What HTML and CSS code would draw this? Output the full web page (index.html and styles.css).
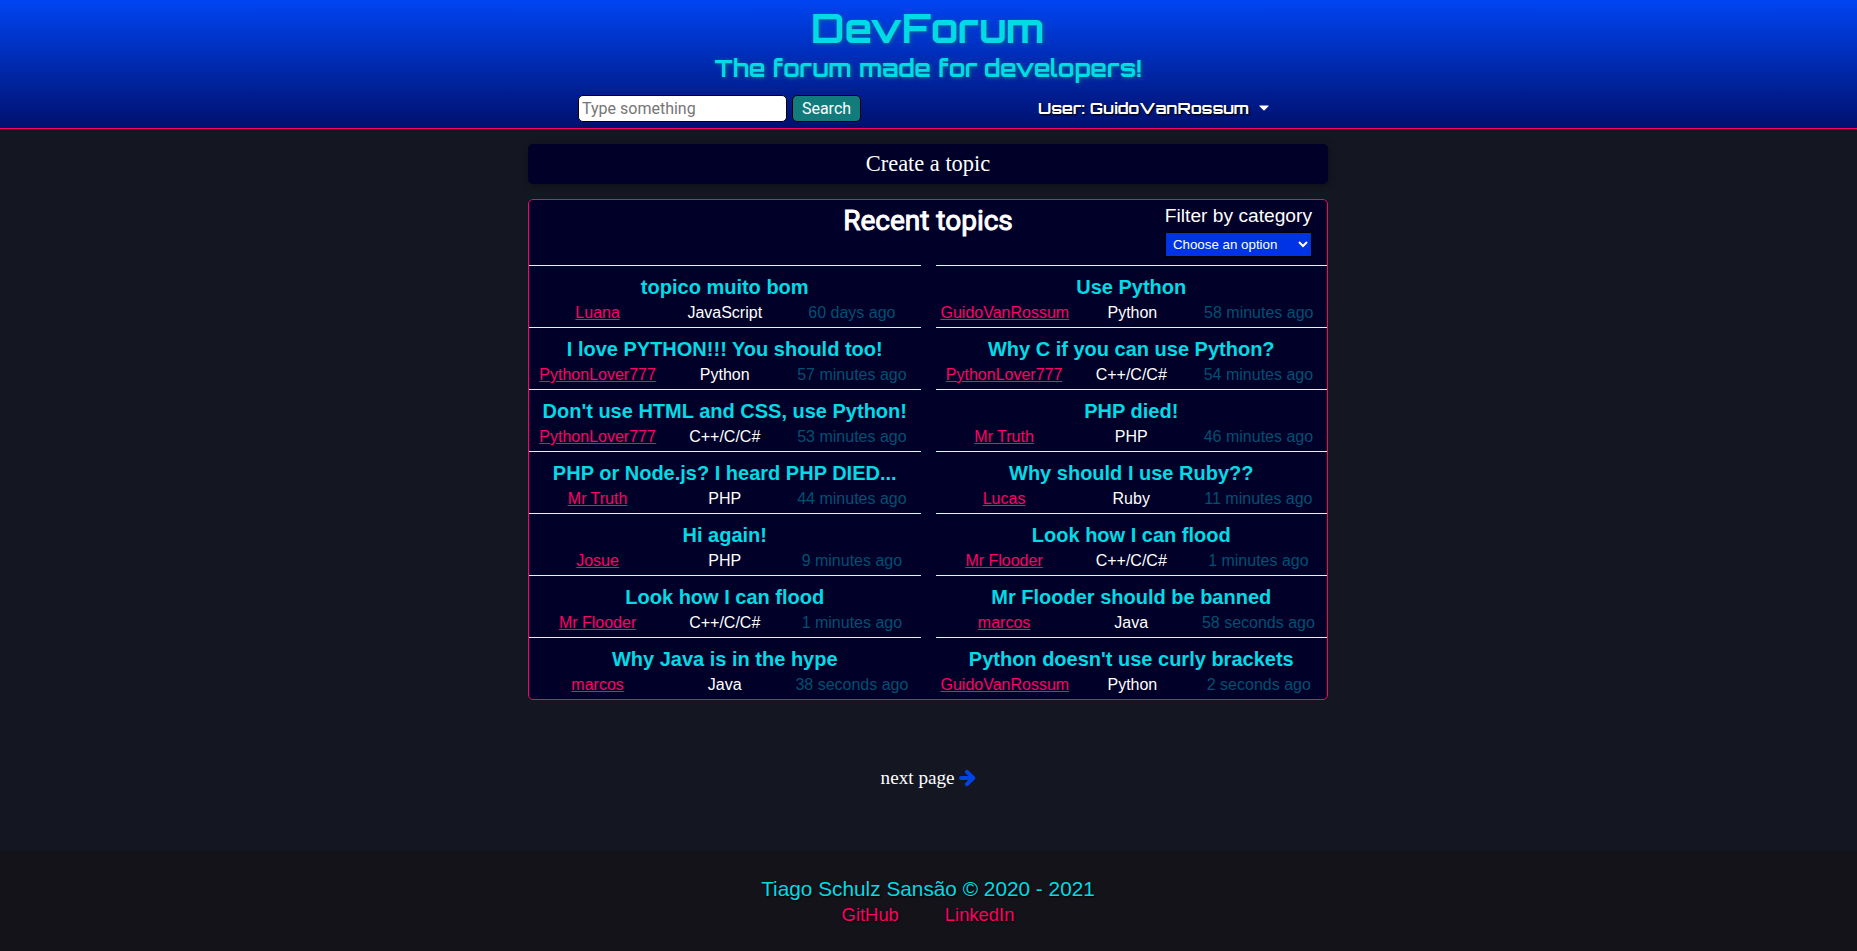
FILE: index.html
```html
<!DOCTYPE html>
<html lang="en">
<head>
<meta charset="utf-8">
<title>DevForum</title>
<link rel="stylesheet" href="styles.css">
</head>
<body>
<header class="header">
  <h1 class="brand">DevForum</h1>
  <h2 class="tagline">The forum made for developers!</h2>
  <div class="header-tools">
    <form class="search">
      <input class="search-input" type="text" placeholder="Type something">
      <button class="search-button" type="button">Search</button>
    </form>
    <div class="user-menu"><span class="user-name">User: GuidoVanRossum</span><svg class="caret" viewBox="0 0 10 6"><path d="M0.9 0.5h8.2c.5 0 .7.5.4.8L5.5 5.2c-.3.3-.7.3-1 0L.5 1.300c-.3-.3-.1-.8.4-.8z"/></svg></div>
  </div>
</header>
<main class="main">
  <a class="create">Create a topic</a>
  <section class="panel">
    <div class="panel-head">
      <h2 class="panel-title">Recent topics</h2>
      <div class="filter">
        <label class="filter-label" for="category">Filter by category</label>
        <select class="filter-select" id="category"><option>Choose an option</option></select>
      </div>
    </div>
    <div class="topics">
      <article class="topic"><h3 class="topic-title">topico muito bom</h3><div class="meta"><a class="author">Luana</a><span>JavaScript</span><time class="ago">60 days ago</time></div></article>
      <article class="topic"><h3 class="topic-title">Use Python</h3><div class="meta"><a class="author">GuidoVanRossum</a><span>Python</span><time class="ago">58 minutes ago</time></div></article>
      <article class="topic"><h3 class="topic-title">I love PYTHON!!! You should too!</h3><div class="meta"><a class="author">PythonLover777</a><span>Python</span><time class="ago">57 minutes ago</time></div></article>
      <article class="topic"><h3 class="topic-title">Why C if you can use Python?</h3><div class="meta"><a class="author">PythonLover777</a><span>C++/C/C#</span><time class="ago">54 minutes ago</time></div></article>
      <article class="topic"><h3 class="topic-title">Don't use HTML and CSS, use Python!</h3><div class="meta"><a class="author">PythonLover777</a><span>C++/C/C#</span><time class="ago">53 minutes ago</time></div></article>
      <article class="topic"><h3 class="topic-title">PHP died!</h3><div class="meta"><a class="author">Mr Truth</a><span>PHP</span><time class="ago">46 minutes ago</time></div></article>
      <article class="topic"><h3 class="topic-title">PHP or Node.js? I heard PHP DIED...</h3><div class="meta"><a class="author">Mr Truth</a><span>PHP</span><time class="ago">44 minutes ago</time></div></article>
      <article class="topic"><h3 class="topic-title">Why should I use Ruby??</h3><div class="meta"><a class="author">Lucas</a><span>Ruby</span><time class="ago">11 minutes ago</time></div></article>
      <article class="topic"><h3 class="topic-title">Hi again!</h3><div class="meta"><a class="author">Josue</a><span>PHP</span><time class="ago">9 minutes ago</time></div></article>
      <article class="topic"><h3 class="topic-title">Look how I can flood</h3><div class="meta"><a class="author">Mr Flooder</a><span>C++/C/C#</span><time class="ago">1 minutes ago</time></div></article>
      <article class="topic"><h3 class="topic-title">Look how I can flood</h3><div class="meta"><a class="author">Mr Flooder</a><span>C++/C/C#</span><time class="ago">1 minutes ago</time></div></article>
      <article class="topic"><h3 class="topic-title">Mr Flooder should be banned</h3><div class="meta"><a class="author">marcos</a><span>Java</span><time class="ago">58 seconds ago</time></div></article>
      <article class="topic"><h3 class="topic-title">Why Java is in the hype</h3><div class="meta"><a class="author">marcos</a><span>Java</span><time class="ago">38 seconds ago</time></div></article>
      <article class="topic"><h3 class="topic-title">Python doesn't use curly brackets</h3><div class="meta"><a class="author">GuidoVanRossum</a><span>Python</span><time class="ago">2 seconds ago</time></div></article>
    </div>
  </section>
  <a class="next">next page <svg class="arrow" viewBox="0 0 17 18"><path d="M2 9H14M8 2.800L14.200 9L8 15.200"/></svg></a>
</main>
<footer class="footer">
  <p class="copyright">Tiago Schulz Sansão © 2020 - 2021</p>
  <nav class="links"><a>GitHub</a><a>LinkedIn</a></nav>
</footer>
</body>
</html>
```
FILE: styles.css
```css
* { box-sizing: border-box; margin: 0; padding: 0; }
body {
  min-height: 951px;
  display: flex;
  flex-direction: column;
  background: #141722;
  color: #fff;
  font-family: "Liberation Sans", Arial, sans-serif;
}
.header {
  height: 129px;
  flex: none;
  padding-right: 1px;
  border-bottom: 1px solid #ff0066;
  background: linear-gradient(#0044f2, #00106e);
  text-align: center;
  font-family: Orbitron, "DejaVu Sans", sans-serif;
}
.brand {
  padding-top: 3px;
  font-size: 40px;
  line-height: 50px;
  color: #00dbe6;
  text-shadow: 1px 1px 4px rgba(18, 124, 125, .7);
}
.tagline {
  font-size: 24px;
  line-height: 30px;
  color: #00dbe6;
  text-shadow: 1px 1px 4px rgba(18, 124, 125, .8);
}
.header-tools {
  width: 800px;
  margin: 12px auto 0;
  padding-left: 50px;
  display: flex;
  align-items: center;
}
.search { display: flex; gap: 5px; width: 283px; flex: none; }
.search-input {
  width: 209px;
  height: 27px;
  padding: 0 3px;
  border: 1px solid #000;
  border-radius: 5px;
  background: #fff;
  font: 16px Roboto, sans-serif;
}
.search-input::placeholder { color: #757575; }
.search-button {
  width: 69px;
  height: 27px;
  border: 1px solid #000;
  border-radius: 5px;
  background: #127c7d;
  color: #fff;
  font: 16px Roboto, sans-serif;
}
.user-menu {
  display: flex;
  align-items: center;
  gap: 10px;
  margin: -2px 0 0 177px;
  font-size: 16px;
  font-weight: bold;
  text-shadow: 1px 1px 2px #000;
}
.caret { width: 10px; height: 6px; margin-top: 1px; fill: #fff; }
.main {
  width: 800px;
  margin: 15px 0 0 calc(50% - 400.5px);
  display: flex;
  flex-direction: column;
  align-items: center;
}
.create {
  width: 100%;
  height: 40px;
  border-radius: 5px;
  background: #000028;
  box-shadow: 1px 1px 6px rgba(0, 0, 0, .4);
  text-align: center;
  font: 22.4px/39px "Liberation Serif", serif;
}
.panel {
  width: 100%;
  margin-top: 15px;
  border: 1px solid #ff0066;
  border-radius: 5px;
  background: #000028;
}
.panel-head {
  height: 65px;
  display: grid;
  grid-template-columns: 1fr auto 1fr;
}
.panel-title {
  grid-column: 2;
  padding-top: 4px;
  font: 28px/34px Roboto, sans-serif;
  -webkit-text-stroke: 1px #fff;
}
.filter {
  justify-self: end;
  display: flex;
  flex-direction: column;
  align-items: center;
  padding: 5px 15px 0 0;
}
.filter-label { font-size: 19.2px; line-height: 22px; }
.filter-select {
  width: 147px;
  height: 25px;
  margin-top: 5px;
  padding: 0 3px;
  border: 1px solid #000;
  background: #0033e6;
  color: #fff;
  font: 13.333px "Liberation Sans", Arial, sans-serif;
}
.topics {
  display: grid;
  grid-template-columns: 1fr 1fr;
  column-gap: 15px;
}
.topic {
  height: 62px;
  border-top: 1px solid #ccffff;
  padding: 10px 5px 0;
  text-align: center;
}
.topic-title { font-size: 20px; line-height: 23px; color: #00dbe6; }
.meta {
  display: grid;
  grid-template-columns: repeat(3, 1fr);
  margin-top: 5px;
  font-size: 16px;
  line-height: 18px;
}
.author { color: #ff0066; text-decoration: underline; }
.ago { color: #005073; }
.next {
  margin-top: 67px;
  padding-left: 1px;
  font: 19.2px/22px "Liberation Serif", serif;
}
.arrow {
  width: 17px;
  height: 18px;
  fill: none;
  stroke: #0044e6;
  stroke-width: 4px;
  stroke-linecap: round;
  stroke-linejoin: round;
  vertical-align: -3px;
}
.footer {
  height: 100px;
  margin-top: auto;
  padding: 26px 1px 0 0;
  background: #131319;
  text-align: center;
  text-shadow: 1px 1px 2px #000;
}
.copyright { font-size: 20.8px; line-height: 24px; color: #00dbe6; }
.links {
  display: flex;
  justify-content: center;
  gap: 46px;
  margin-top: 3px;
  font-size: 18.4px;
  line-height: 21px;
  color: #ff0066;
}
```
